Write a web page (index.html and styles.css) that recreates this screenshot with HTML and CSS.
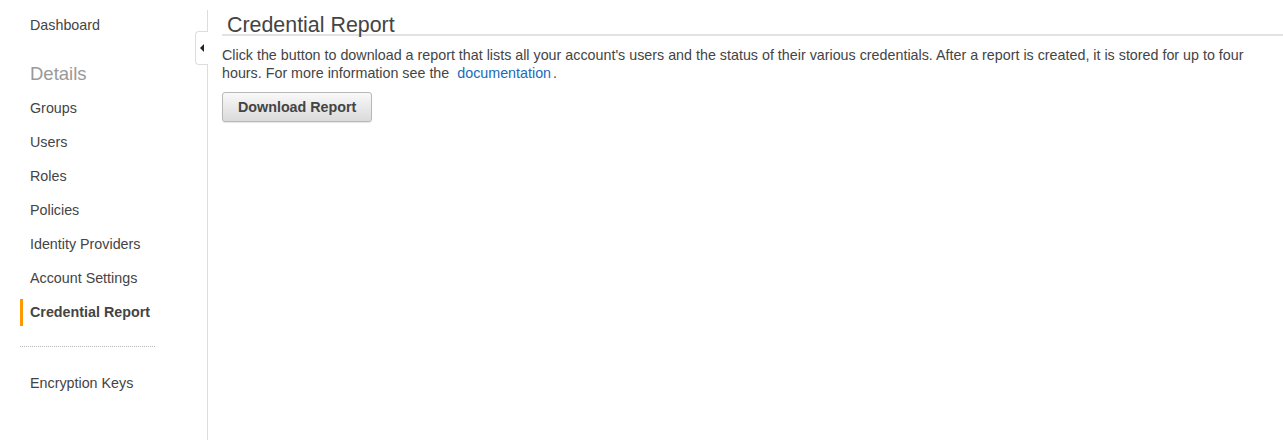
FILE: index.html
```html
<!DOCTYPE html>
<html lang="en">
<head>
    <meta charset="UTF-8">
    <title>Credential Report</title>
    <link rel="stylesheet" href="styles.css">
</head>
<body>
    <div class="page">
        <div class="sidebar">
            <ul class="nav">
                <li class="nav-item">Dashboard</li>
                <li class="nav-heading">Details</li>
                <li class="nav-item">Groups</li>
                <li class="nav-item">Users</li>
                <li class="nav-item">Roles</li>
                <li class="nav-item">Policies</li>
                <li class="nav-item">Identity Providers</li>
                <li class="nav-item">Account Settings</li>
                <li class="nav-item active">Credential Report</li>
                <li class="nav-divider"></li>
                <li class="nav-item">Encryption Keys</li>
            </ul>
            <!-- collapse tab -->
            <div class="collapse-tab"><span class="arrow"></span></div>
        </div>

        <div class="main">
            <h1 class="title">Credential Report</h1>
            <p class="intro">
                Click the button to download a report that lists all your account's users and the status of their various credentials. After a report is created, it is stored for up to four hours. For more information see the <a href="#" class="doc-link">documentation</a>.
            </p>
            <button class="btn">Download Report</button>
        </div>
    </div>
</body>
</html>
```

FILE: styles.css
```css
body {
    margin: 0;
    padding: 0;
    background: #fff;
    font-family: "Liberation Sans", Arial, sans-serif;
    font-size: 14.3px;
    color: #444;
}

.page {
    display: flex;
    padding-top: 10px;
    min-height: 430px;
}

/* Sidebar */
.sidebar {
    position: relative;
    width: 207px;
    flex-shrink: 0;
    border-right: 1px solid #ddd;
}

.nav {
    list-style: none;
    margin: 0;
    padding: 2px 0 0 20px;
}

.nav-item {
    line-height: 27px;
    padding-left: 10px;
    margin-bottom: 7px;
    color: #444;
}

.nav-item.active {
    font-weight: bold;
    border-left: 3px solid #f90;
    padding-left: 7px;
    margin-bottom: 0;
}

.nav-heading {
    font-size: 18.5px;
    line-height: 27px;
    color: #999;
    padding-left: 10px;
    margin: 21px 0 8px;
}

.nav-divider {
    width: 135px;
    border-top: 1px dotted #bbb;
    margin: 20px 0 23px;
}

.collapse-tab {
    position: absolute;
    top: 21px;
    right: -1px;
    width: 12px;
    height: 32px;
    background: #fff;
    border: 1px solid #ddd;
    border-right: none;
    border-radius: 4px 0 0 4px;
    display: flex;
    align-items: center;
    justify-content: center;
}

.arrow {
    width: 0;
    height: 0;
    border-top: 4px solid transparent;
    border-bottom: 4px solid transparent;
    border-right: 4px solid #222;
    margin-top: -1px;
}

/* Main */
.main {
    flex: 1;
    padding-left: 14px;
}

.title {
    margin: 0;
    padding: 6px 0 0 5px;
    font-size: 21.4px;
    font-weight: normal;
    line-height: 18px;
    color: #444;
    border-bottom: 2px solid #e2e2e2;
}

.intro {
    margin: 10px 30px 10px 0;
    line-height: 18px;
}

.doc-link {
    color: #1a6bb8;
    text-decoration: none;
    margin: 0 2px 0 4px;
}

.btn {
    font-family: "Liberation Sans", Arial, sans-serif;
    font-size: 14.3px;
    font-weight: bold;
    color: #444;
    height: 30px;
    padding: 0 15px;
    border: 1px solid #b8b8b8;
    border-radius: 3px;
    background: linear-gradient(#f9f9f9, #dadada);
    box-shadow: 0 1px 1px rgba(0, 0, 0, 0.1);
    cursor: pointer;
}
```
